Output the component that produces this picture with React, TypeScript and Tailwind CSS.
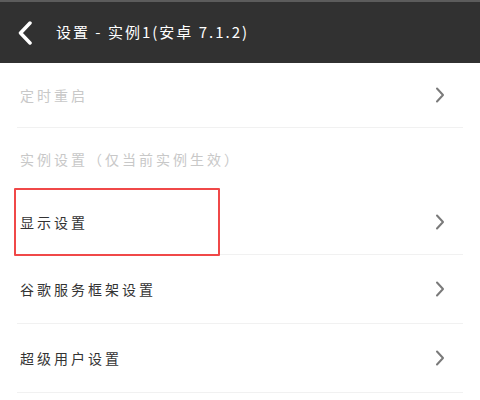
import React from 'react';

const FONT = { fontFamily: '"Noto Sans CJK SC", "Noto Sans", sans-serif' };

const Chevron = () => (
    <svg width="10" height="16" viewBox="0 0 10 16" className="shrink-0">
        <path d="M2 1.5 L8 8 L2 14.5" fill="none" stroke="#7a7a7a" strokeWidth="2" strokeLinecap="round" strokeLinejoin="round" />
    </svg>
);

interface RowProps {
    label: string;
    height: string;
    muted?: boolean;
    arrow?: boolean;
    divider?: boolean;
    highlight?: boolean;
}

const Row = ({ label, height, muted, arrow = true, divider = true, highlight }: RowProps) => (
    <div className="relative">
        <div className={`flex items-center justify-between pl-[20px] pr-[35px] ${height}`}>
            <span className={`text-[14px] tracking-[3px] ${muted ? 'text-[#c8c8c8]' : 'text-[#333333]'}`}>{label}</span>
            {arrow && <Chevron />}
        </div>
        {divider && <div className="mx-[17px] h-px bg-[#f1f1f1]" />}
        {highlight && (
            <div className="absolute left-[14px] top-[-2px] w-[206px] h-[68px] border-2 border-[#f04848] rounded-[1px]" />
        )}
    </div>
);

export default function App() {
    return (
        <div className="w-[480px] h-[400px] bg-white overflow-hidden" style={FONT}>
            {/* Title bar */}
            <div className="h-[63px] bg-[#313131] border-t-2 border-[#5c5c5c] flex items-center">
                <svg width="16" height="24" viewBox="0 0 16 24" className="ml-[17px]">
                    <path d="M13 2 L3.5 12 L13 22" fill="none" stroke="#ffffff" strokeWidth="3.5" strokeLinecap="round" strokeLinejoin="round" />
                </svg>
                <span className="ml-[23px] text-white text-[15px] tracking-[2px]">设置 - 实例1(安卓 7.1.2)</span>
            </div>

            <Row label="定时重启" height="h-[64px]" muted />
            <Row label="实例设置（仅当前实例生效）" height="h-[62px]" muted arrow={false} divider={false} />
            <Row label="显示设置" height="h-[64px]" highlight />
            <Row label="谷歌服务框架设置" height="h-[68px]" />
            <Row label="超级用户设置" height="h-[68px]" />
        </div>
    );
}
